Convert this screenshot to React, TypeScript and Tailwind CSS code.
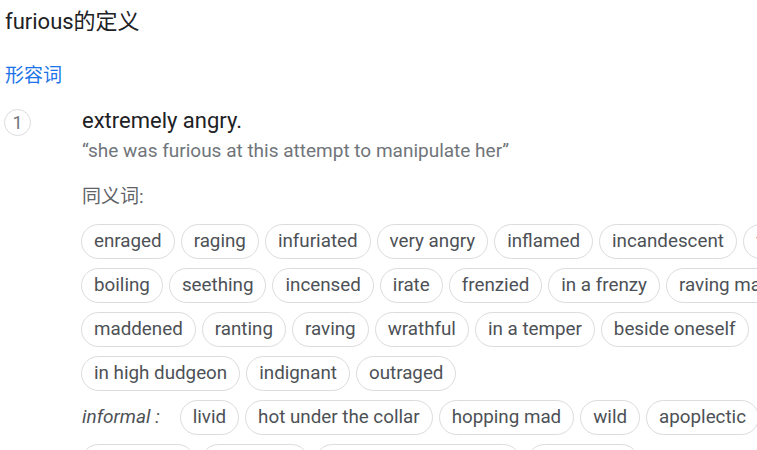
import React from "react";

const synonyms = [
  "enraged", "raging", "infuriated", "very angry", "inflamed", "incandescent", "fuming",
  "boiling", "seething", "incensed", "irate", "frenzied", "in a frenzy", "raving mad",
  "maddened", "ranting", "raving", "wrathful", "in a temper", "beside oneself",
  "in high dudgeon", "indignant", "outraged",
];

const informal = [
  "livid", "hot under the collar", "hopping mad", "wild", "apoplectic",
  "ratty", "up in arms", "in a lather", "foaming at the mouth", "in a paddy",
];

const Chip: React.FC<{ text: string }> = ({ text }) => (
  <span className="h-[35px] px-[12px] flex items-center rounded-full border border-[#dadce0] text-[18.8px] text-[#4d5156] whitespace-nowrap">
    {text}
  </span>
);

export default function App() {
  return (
    <div
      className="w-[757px] h-[450px] overflow-hidden bg-white"
      style={{ fontFamily: 'Roboto, "Noto Sans CJK SC", sans-serif' }}
    >
      <div className="w-[900px] pl-[5px]">
        <div className="h-[44px] leading-[44px] text-[22px] text-[#202124]">furious的定义</div>

        <div className="mt-[20px] leading-[24px] text-[19px] text-[#1a73e8]">形容词</div>

        <div className="flex mt-[19px]">
          <div className="w-[27px] h-[27px] mt-[2px] -ml-[1px] rounded-full border border-[#dadce0] flex items-center justify-center text-[18px] text-[#70757a]">
            1
          </div>
          <div className="ml-[51px] w-[780px]">
            <div className="leading-[28px] text-[22px] text-[#202124]">extremely angry.</div>
            <div className="mt-[4px] leading-[24px] text-[19px] text-[#70757a]">
              “she was furious at this attempt to manipulate her”
            </div>
            <div className="mt-[22px] leading-[24px] text-[19px] text-[#5f6368]">同义词:</div>

            <div className="-ml-[1px]">
              <div className="mt-[15px] flex flex-wrap gap-x-[6px] gap-y-[9px]">
                {synonyms.map((s) => (
                  <Chip key={s} text={s} />
                ))}
              </div>

              <div className="mt-[9px] flex flex-wrap gap-x-[6px] gap-y-[9px]">
                <span className="h-[35px] ml-[1px] mr-[14px] flex items-center italic text-[19px] text-[#4d5156]">
                  informal :
                </span>
                {informal.map((s) => (
                  <Chip key={s} text={s} />
                ))}
              </div>
            </div>
          </div>
        </div>
      </div>
    </div>
  );
}
